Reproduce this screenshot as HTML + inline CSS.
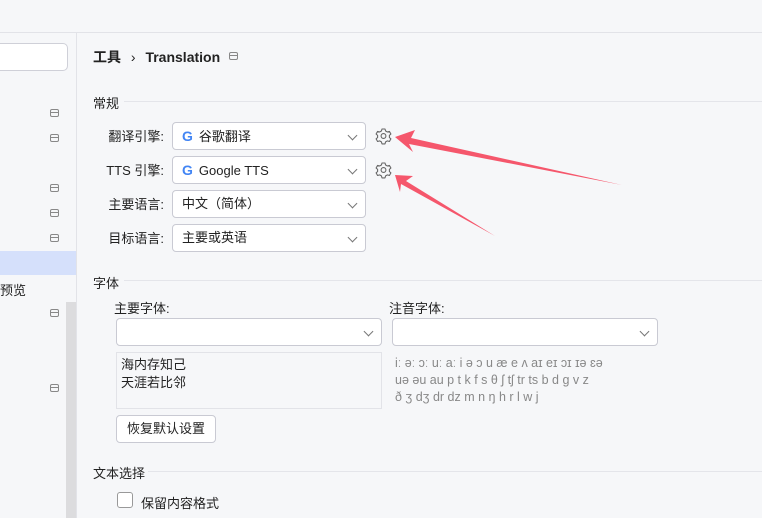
<!DOCTYPE html><html><head><meta charset="utf-8"><style>
*{box-sizing:border-box;margin:0;padding:0}
body{width:762px;height:518px;overflow:hidden;background:#f6f7f9;font-family:"Liberation Sans","Noto Sans CJK SC",sans-serif;font-size:13px;color:#222;position:relative}
.a{position:absolute}
.sel{position:absolute;background:#fff;border:1px solid #c9cad3;border-radius:4px;height:28px;font-size:13px;line-height:26px;padding-left:9px}
.sel .ch{position:absolute;right:9px;top:9px;width:7px;height:7px;border-right:1px solid #777;border-bottom:1px solid #777;transform:rotate(45deg)}
.lbl{position:absolute;font-size:13px;text-align:right;width:80px}
.hl{position:absolute;height:1px;background:#e4e5ea}
.ic{position:absolute;width:9px;height:8px;border:1px solid #888;border-radius:2px}
.ic:after{content:"";position:absolute;left:0;right:0;top:2px;height:1px;background:#888}
.g{font-weight:bold;font-size:14px;margin-right:6px;color:#4285f4}
</style></head><body>
<div class="a" style="left:0;top:32px;width:762px;height:1px;background:#e2e3e8"></div>
<div class="a" style="left:76px;top:32px;width:1px;height:486px;background:#e2e3e8"></div>
<div class="a" style="left:-5px;top:43px;width:73px;height:28px;background:#fff;border:1px solid #cfd0d8;border-radius:5px"></div>
<div class="ic" style="left:50px;top:109px"></div>
<div class="ic" style="left:50px;top:134px"></div>
<div class="ic" style="left:50px;top:184px"></div>
<div class="ic" style="left:50px;top:209px"></div>
<div class="ic" style="left:50px;top:234px"></div>
<div class="a" style="left:0;top:251px;width:76px;height:24px;background:#d5e0fb"></div>
<div class="a" style="left:0;top:280px;font-size:13px">预览</div>
<div class="a" style="left:66px;top:302px;width:10px;height:216px;background:#dcdcde"></div>
<div class="ic" style="left:50px;top:309px"></div>
<div class="ic" style="left:50px;top:384px"></div>

<div class="a" style="left:93px;top:47px;font-size:14px;font-weight:bold">工具 <span style="font-weight:normal;margin:0 6px">›</span> Translation</div>
<div class="ic" style="left:229px;top:52px"></div>

<div class="a" style="left:93px;top:93px">常规</div><div class="hl" style="left:124px;top:101px;width:638px"></div>
<div class="lbl" style="left:84px;top:126px">翻译引擎:</div>
<div class="sel" style="left:172px;top:122px;width:194px"><span class="g">G</span>谷歌翻译<i class="ch"></i></div>
<div class="lbl" style="left:84px;top:160px">TTS 引擎:</div>
<div class="sel" style="left:172px;top:156px;width:194px"><span class="g">G</span>Google TTS<i class="ch"></i></div>
<div class="lbl" style="left:84px;top:194px">主要语言:</div>
<div class="sel" style="left:172px;top:190px;width:194px">中文（简体）<i class="ch"></i></div>
<div class="lbl" style="left:84px;top:228px">目标语言:</div>
<div class="sel" style="left:172px;top:224px;width:194px">主要或英语<i class="ch"></i></div>
<svg class="a" style="left:375px;top:127px" width="18" height="60" viewBox="0 0 18 60" fill="none" stroke="#666" stroke-width="1.1" stroke-linejoin="round">
<g id="gr"><circle cx="8.5" cy="9" r="2.4"/><path d="M7 2h3l.6 2 1.8 1 2-.6 1.5 2.6-1.5 1.4v2.1l1.5 1.4-1.5 2.6-2-.6-1.8 1-.6 2h-3l-.6-2-1.8-1-2 .6-1.5-2.6 1.5-1.4v-2.1l-1.5-1.4 1.5-2.6 2 .6 1.8-1z"/></g>
<use href="#gr" y="34"/></svg>

<div class="a" style="left:93px;top:273px">字体</div><div class="hl" style="left:124px;top:280px;width:638px"></div>
<div class="a" style="left:114px;top:298px">主要字体:</div>
<div class="sel" style="left:116px;top:318px;width:266px"><i class="ch"></i></div>
<div class="a" style="left:116px;top:352px;width:266px;height:57px;border:1px solid #e2e3e8;padding:3px 4px;line-height:18px">海内存知己<br>天涯若比邻</div>
<div class="a" style="left:116px;top:415px;width:100px;height:28px;background:#fff;border:1px solid #c9cad3;border-radius:4px;text-align:center;line-height:26px">恢复默认设置</div>
<div class="a" style="left:389px;top:298px">注音字体:</div>
<div class="sel" style="left:392px;top:318px;width:266px"><i class="ch"></i></div>
<div class="a" style="left:395px;top:355px;color:#888;font-size:12.5px;letter-spacing:0;line-height:17px">iː əː ɔː uː aː i ə ɔ u æ e ʌ aɪ eɪ ɔɪ ɪə ɛə<br>uə əu au p t k f s θ ʃ tʃ tr ts b d g v z<br>ð ʒ dʒ dr dz m n ŋ h r l w j</div>

<div class="a" style="left:93px;top:463px">文本选择</div><div class="hl" style="left:148px;top:471px;width:614px"></div>
<div class="a" style="left:117px;top:492px;width:16px;height:16px;background:#fff;border:1px solid #999;border-radius:3px"></div>
<div class="a" style="left:141px;top:493px">保留内容格式</div>

<svg class="a" style="left:0;top:0" width="762" height="518"><g fill="#f5576c">
<polygon points="395,137 415,130 411,138 622,185 409,144 413,152"/>
<polygon points="395,175 413,176 406,181 495,236 401,184 400,192"/></g></svg>
</body></html>
